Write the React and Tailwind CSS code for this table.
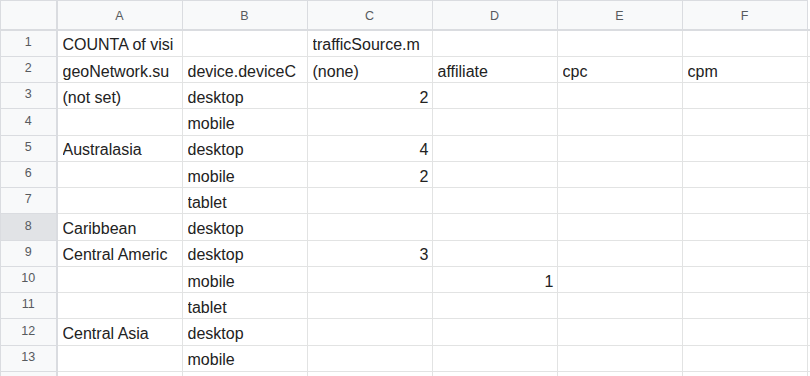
const columns = ["A", "B", "C", "D", "E", "F"];

// cell values as they appear (already clipped by the sheet)
const rows = [
  ["COUNTA of visi", "", "trafficSource.m", "", "", ""],
  ["geoNetwork.su", "device.deviceC", "(none)", "affiliate", "cpc", "cpm"],
  ["(not set)", "desktop", 2, "", "", ""],
  ["", "mobile", "", "", "", ""],
  ["Australasia", "desktop", 4, "", "", ""],
  ["", "mobile", 2, "", "", ""],
  ["", "tablet", "", "", "", ""],
  ["Caribbean", "desktop", "", "", "", ""],
  ["Central Americ", "desktop", 3, "", "", ""],
  ["", "mobile", "", 1, "", ""],
  ["", "tablet", "", "", "", ""],
  ["Central Asia", "desktop", "", "", "", ""],
  ["", "mobile", "", "", "", ""],
  ["", "", "", "", "", ""],
];

const Cell = ({ value }) => {
  const isNumber = typeof value === "number";
  return (
    <div className="bg-white border-r border-b border-[#e2e3e3] flex items-end pb-[1.5px] pl-[5px] pr-[3px] min-w-0">
      <div
        className={`w-full overflow-hidden whitespace-nowrap text-[16px] leading-[18px] text-[#222] ${
          isNumber ? "text-right" : "text-left"
        }`}
      >
        {value}
      </div>
    </div>
  );
};

const App = () => {
  return (
    <div
      className="w-[810px] h-[376px] overflow-hidden bg-white"
      style={{ fontFamily: '"Liberation Sans", Arial, sans-serif' }}
    >
      <div className="grid grid-cols-[57.5px_repeat(6,125px)_1fr] grid-rows-[30.5px_repeat(14,26.25px)]">
        {/* corner */}
        <div className="bg-[#f8f9fa] border-t border-l border-r-2 border-b-2 border-[#dadce0]" />
        {columns.map((c) => (
          <div
            key={c}
            className="bg-[#f8f9fa] border-t border-r border-b-2 border-[#dadce0] flex items-center justify-center pt-[3px] text-[12.5px] text-[#575a5e]"
          >
            {c}
          </div>
        ))}
        <div className="bg-white border-b-2 border-[#dadce0]" />

        {rows.map((row, i) => (
          <div key={i} className="contents">
            {/* row 14 is cut by the window, its number is not visible */}
            <div
              className={`border-l border-r-2 border-b border-[#dadce0] flex items-center justify-center pb-[2px] text-[12.5px] text-[#575a5e] ${
                i === 7 ? "bg-[#e1e3e6]" : "bg-[#f8f9fa]"
              }`}
            >
              {i < 13 ? i + 1 : ""}
            </div>
            {row.map((v, j) => (
              <Cell key={j} value={v} />
            ))}
            <div className="bg-white border-b border-[#e2e3e3]" />
          </div>
        ))}
      </div>
    </div>
  );
};

export default App;
